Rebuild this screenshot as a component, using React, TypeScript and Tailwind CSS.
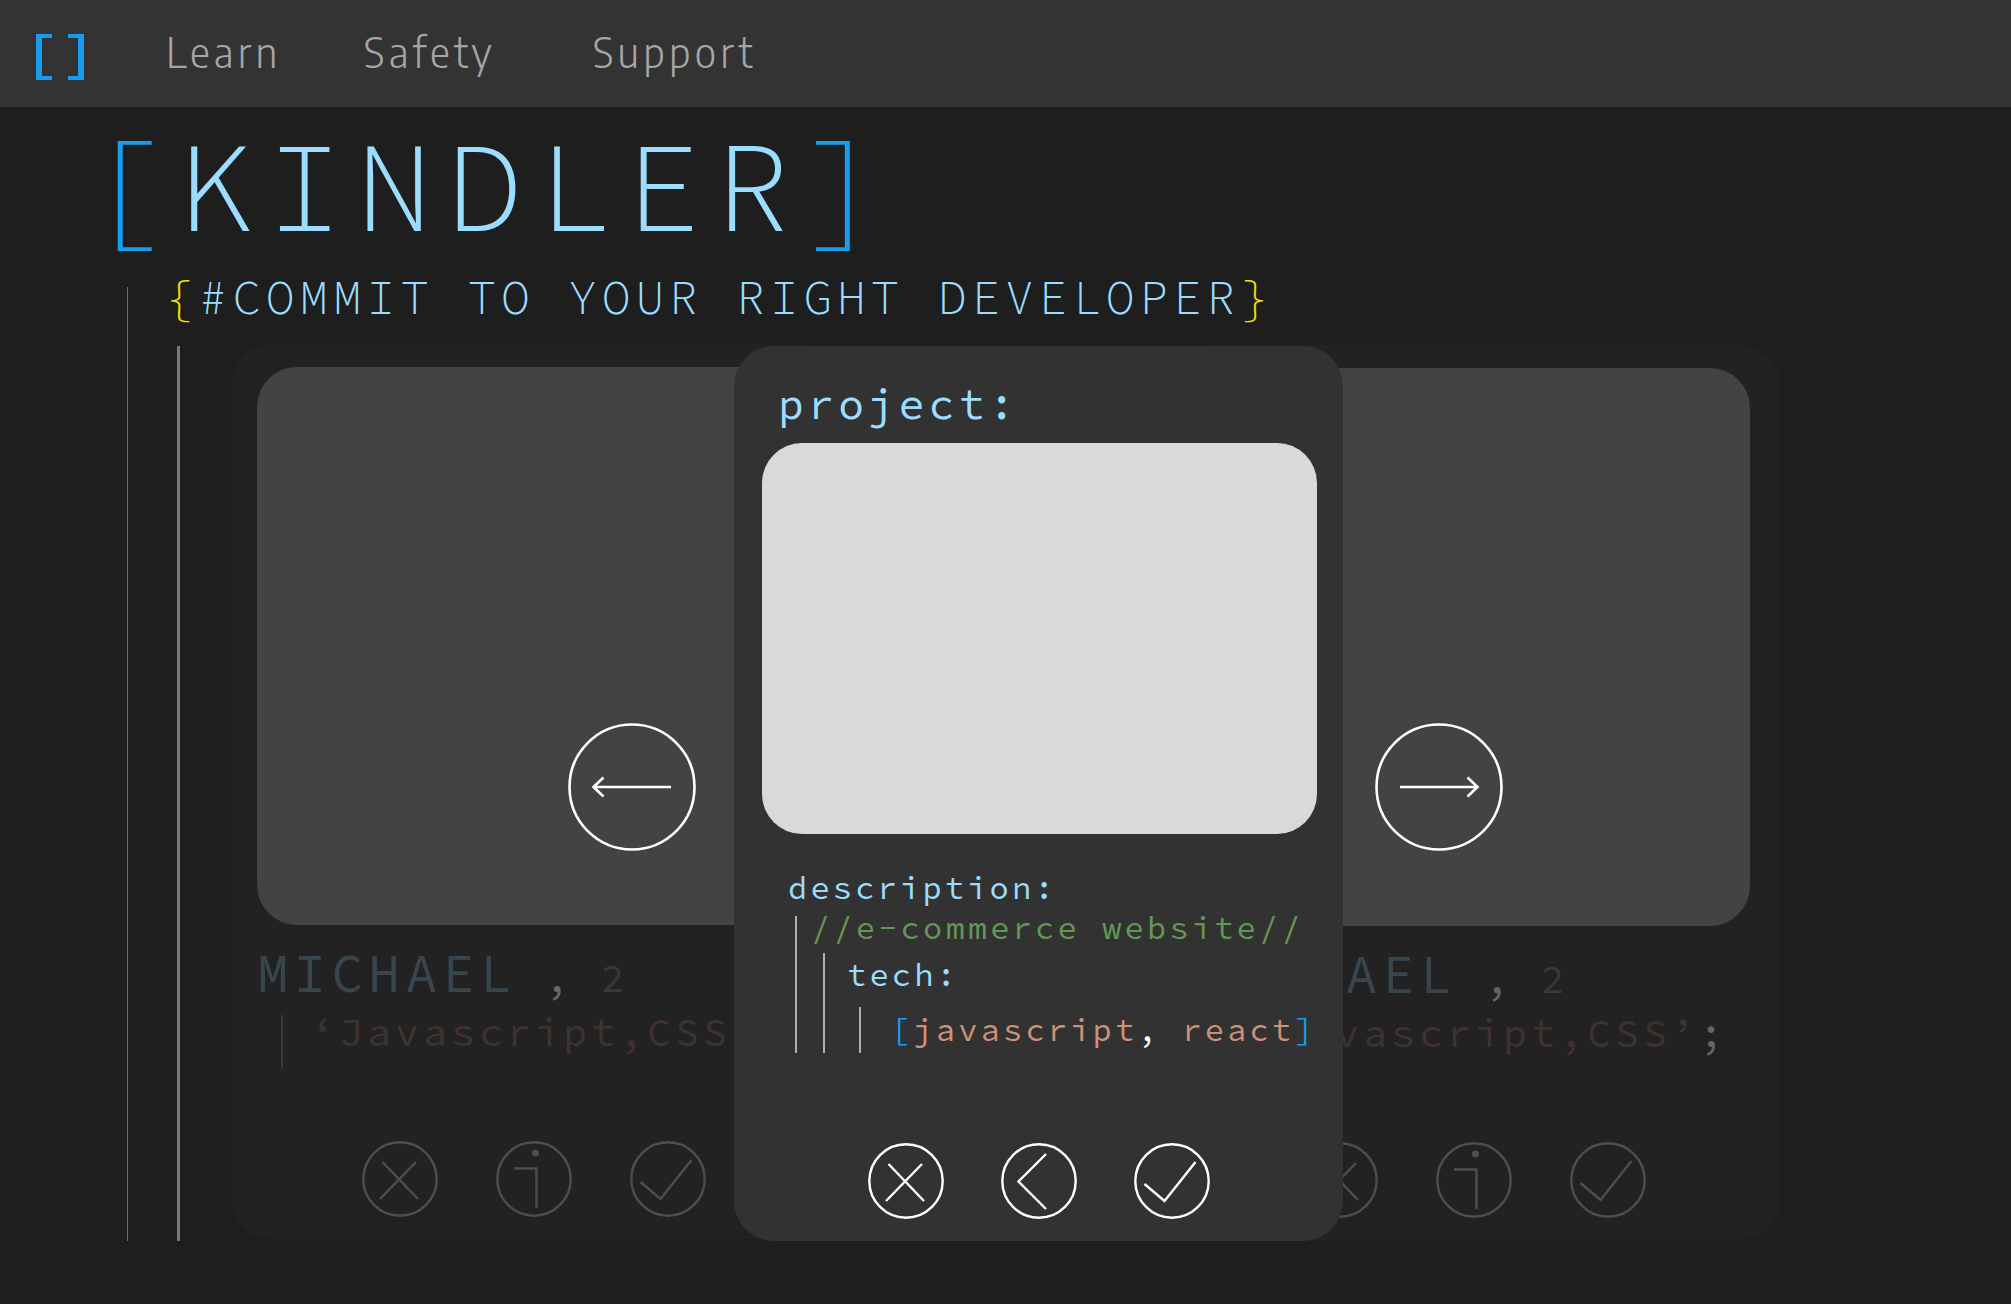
import type { ReactNode } from 'react';

const NAV_LINKS = [
  { label: 'Learn', width: 'w-[198px]' },
  { label: 'Safety', width: 'w-[229px]' },
  { label: 'Support', width: 'w-[200px]' },
];

type IconName = 'cross' | 'info' | 'back' | 'check';

function Glyph({ name }: { name: IconName }) {
  if (name === 'cross') return <path d="M20.5 21 56 58M54 21 18 58" />;
  if (name === 'back') return <path d="M45 11 17.5 38.5 45 66" />;
  if (name === 'check') return <path d="M10.5 41 30.5 58 61.5 19" />;
  return (
    <>
      <path d="M18 27.5H40.5V67" />
      <circle cx="39.5" cy="12" r="3.5" fill="currentColor" stroke="none" />
    </>
  );
}

function RoundButton({ name, label }: { name: IconName; label: string }) {
  return (
    <button type="button" aria-label={label} className="size-[76px] rounded-full">
      <svg viewBox="0 0 76 76" className="size-full" fill="none" stroke="currentColor" strokeWidth="2.4">
        <circle cx="38" cy="38" r="36.7" />
        <Glyph name={name} />
      </svg>
    </button>
  );
}

function ArrowButton({ label, path }: { label: string; path: string }) {
  return (
    <button type="button" aria-label={label} className="size-[128px] rounded-full text-white">
      <svg viewBox="0 0 128 128" className="size-full" fill="none" stroke="currentColor" strokeWidth="2.6">
        <circle cx="64" cy="64" r="62.5" />
        <path d={path} />
      </svg>
    </button>
  );
}

function Bracket({ children }: { children: ReactNode }) {
  return <span className="text-[#189cf0]">{children}</span>;
}

function ProfileCard({ name, level, skills }: { name: string; level: string; skills: string }) {
  return (
    <article className="flex h-full flex-col rounded-[40px] bg-[#222222] pt-[23px] pr-[30px] pl-[26px]">
      <div className="h-[558px] w-full shrink-0 rounded-[40px] bg-[#434343]" />
      <h2 className="mt-4 text-[53px] leading-[64px] tracking-widest whitespace-pre text-[#37464d]">
        {name}
        <span className="text-[40px] tracking-widest text-[#666666]"> , </span>
        <span className="text-[40px] text-[#3c363a]">{level}</span>
      </h2>
      <div className="mt-[5px] ml-6 flex h-[54px] items-start border-l-2 border-[#383838] pl-7">
        <p className="text-[40px] leading-[34px] tracking-widest whitespace-nowrap text-[#3f322e]">
          ‘{skills}’<span className="text-[#666666]">;</span>
        </p>
      </div>
      <div className="mt-[72px] flex justify-center gap-[58px] text-[#4e4e4e]">
        <RoundButton name="cross" label="Reject" />
        <RoundButton name="info" label="Info" />
        <RoundButton name="check" label="Accept" />
      </div>
    </article>
  );
}

function ProjectCard() {
  return (
    <article className="flex h-full flex-col rounded-[40px] bg-[#323232] pt-[31px] pr-[26px] pl-7 text-[#9cdcfe]">
      <h2 className="pl-4 text-[43px] leading-[54px] tracking-widest">project:</h2>
      <div className="mt-3 h-[391px] w-full shrink-0 rounded-[40px] bg-[#d9d9d9]" />
      <div className="mt-8 pl-[26px] text-[32px] tracking-widest whitespace-nowrap">
        <h3 className="leading-[44px]">description:</h3>
        <div className="mt-[6px] ml-[7px] border-l-2 border-[#b0b0b0]">
          <p className="pl-[14px] leading-6 text-[#629755]">//e-commerce website//</p>
          <div className="mt-[13px] ml-[26px] border-l-2 border-[#b0b0b0] pt-[2px]">
            <h4 className="pl-[22px] leading-[40px]">tech:</h4>
            <div className="mt-[12px] ml-[34px] flex h-[46px] items-center border-l-2 border-[#b0b0b0] pl-[30px]">
              <p className="leading-[44px] text-[#ce9178]">
                <Bracket>[</Bracket>javascript<span className="text-white">,</span> react
                <Bracket>]</Bracket>
              </p>
            </div>
          </div>
        </div>
      </div>
      <div className="mt-[90px] mr-[2px] flex justify-center gap-[57px] text-white">
        <RoundButton name="cross" label="Reject" />
        <RoundButton name="back" label="Back" />
        <RoundButton name="check" label="Accept" />
      </div>
    </article>
  );
}

export default function App() {
  return (
    <div className="min-h-screen bg-[#1e1e1e] font-['Source_Code_Pro','Liberation_Mono',monospace]">
      <header className="flex h-[107px] items-center bg-[#333333] pl-9">
        <a href="#home" aria-label="Kindler home" className="w-[130px] pt-[6px]">
          <svg viewBox="0 0 48 46" className="h-[46px] w-12" fill="#189cf0">
            <path d="M0 0H16V4H6V42H16V46H0ZM48 0H32V4H42V42H32V46H48Z" />
          </svg>
        </a>
        <nav className="flex pb-[6px] font-['Encode_Sans_Semi_Condensed','Encode_Sans_Condensed','Noto_Sans',sans-serif] text-[42px] leading-[50px] font-light tracking-widest text-[#a6a6a6]">
          {NAV_LINKS.map((link) => (
            <div key={link.label} className={link.width}>
              <a href={'#' + link.label.toLowerCase()}>{link.label}</a>
            </div>
          ))}
        </nav>
      </header>

      <main>
        <h1 className="mb-[22px] pl-[87px] text-[128px] leading-[158px] font-light tracking-widest whitespace-nowrap text-[#9cdcfe]">
          <Bracket>[</Bracket>KINDLER<Bracket>]</Bracket>
        </h1>

        <div className="ml-[127px] flow-root border-l border-[#6b6b6b]">
          <p className="-mt-[19px] mb-5 pl-[37px] text-[48px] leading-[58px] font-light tracking-widest whitespace-nowrap text-[#9cdcfe]">
            <span className="text-[#f5e000]">{'{'}</span>#COMMIT TO YOUR RIGHT DEVELOPER
            <span className="text-[#f5e000]">{'}'}</span>
          </p>

          <div className="ml-[49px] border-l-3 border-[#787878] pr-[231px] pl-[51px]">
            <section className="grid grid-cols-[503fr_106fr_331fr_172fr_437fr] grid-rows-[895px]">
              <div className="col-start-1 col-end-3 row-start-1 -mt-[2px] mb-[2px]">
                <ProfileCard name="MICHAEL" level="2" skills="Javascript,CSS" />
              </div>
              <div className="col-start-4 col-end-6 row-start-1 -mt-px mb-px">
                <ProfileCard name="MICHAEL" level="2" skills="Javascript,CSS" />
              </div>
              <div className="z-10 col-start-2 col-end-5 row-start-1">
                <ProjectCard />
              </div>
              <div className="z-20 col-start-1 row-start-1 mt-[377px] mr-[38px] self-start justify-self-end">
                <ArrowButton label="Previous" path="M103 64H25M35.5 54.5 25.5 64 35.5 73.5" />
              </div>
              <div className="z-20 col-start-5 row-start-1 mt-[377px] ml-8 self-start justify-self-start">
                <ArrowButton label="Next" path="M25 64H103M92.5 54.5 102.5 64 92.5 73.5" />
              </div>
            </section>
          </div>
        </div>
      </main>
    </div>
  );
}
